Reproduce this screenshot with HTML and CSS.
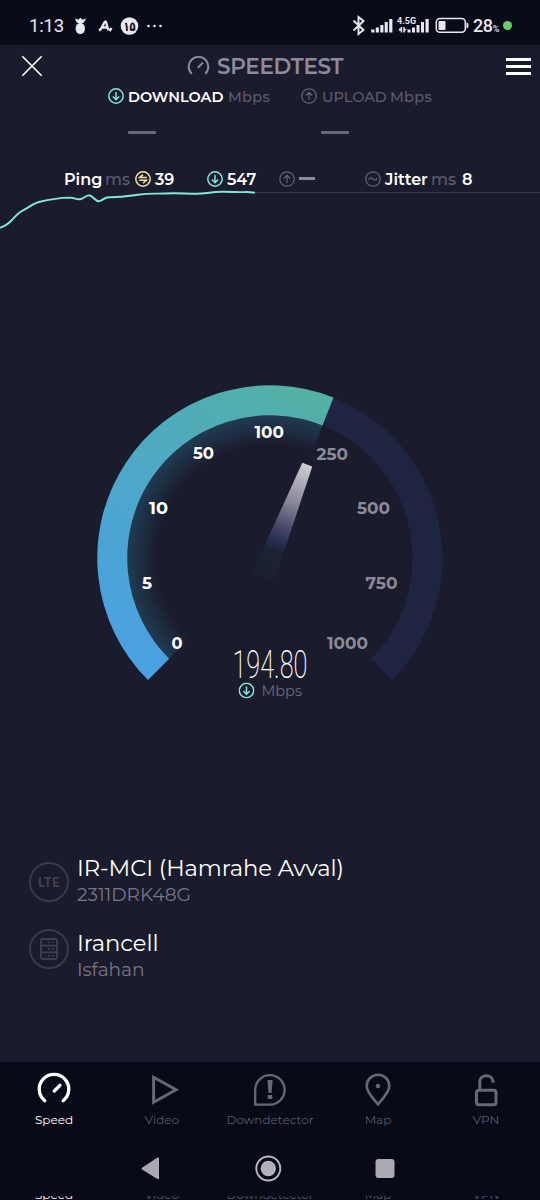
FILE: index.html
```html
<!DOCTYPE html>
<html lang="en">
<head>
<meta charset="utf-8">
<title>Speedtest</title>
<link rel="stylesheet" href="styles.css">
</head>
<body>
<svg class="defs" width="0" height="0" aria-hidden="true">
  <symbol id="down" viewBox="0 0 16 16"><circle cx="8" cy="8" r="7.2"/><path d="M8 4v7.6M4.8 8.5 8 11.7l3.2-3.2"/></symbol>
  <symbol id="up" viewBox="0 0 16 16"><circle cx="8" cy="8" r="7.2"/><path d="M8 12V4.4M4.8 7.5 8 4.3l3.2 3.2"/></symbol>
  <symbol id="ping" viewBox="0 0 16 16"><circle cx="8" cy="8" r="7.2"/><path d="M11.8 6.6H4.5L8 3.6M4.2 9.2h7.3L8 12.3"/></symbol>
  <symbol id="wave" viewBox="0 0 16 16"><circle cx="8" cy="8" r="7.2"/><path d="M3.7 9C5 6.3 6.6 6.5 8 8s3 1.600 4.300-.8"/></symbol>
</svg>
<main class="phone">
  <header class="status">
    <span class="clock">1:13</span>
    <svg class="notices" width="90" height="22" viewBox="0 0 90 22">
      <g fill="#e9e8ef"><ellipse cx="6.300" cy="13.500" rx="4.700" ry="5.600"/><path d="M.8 3.300l3.200 1.500 2.500-2 2 2 3.700-1.500-2.200 4-3.500 2-4-2z"/>
      <circle cx="55.500" cy="11" r="8.800"/><circle cx="74.500" cy="11" r="1.300"/><circle cx="80.500" cy="11" r="1.300"/><circle cx="86.500" cy="11" r="1.300"/></g>
      <path d="M25 15.500c4-2 4.500-9 6.300-9 1.700 0 1.200 6 3.200 8.500M27.500 12.500h5.500M35.500 16l2-3" fill="none" stroke="#e9e8ef" stroke-width="2.400"/>
      <text x="49.500" y="15.500" class="badge" textLength="12" lengthAdjust="spacingAndGlyphs">۱۵</text>
    </svg>
    <svg class="signals" width="117" height="24" viewBox="352 14 117 24">
      <path d="M353.500 20.500l10 9.500-5 4V17l5 4-10 9.500" fill="none" stroke="#e9e8ef" stroke-width="1.900"/>
      <g fill="#e9e8ef">
        <path d="M371.200 29.500h3.300v3h-3.300zM375.800 27.500h3.100v5h-3.100zM380.300 25h3.100v7.500h-3.100zM384.700 22h3.100v10.500h-3.100zM389.200 19h3.200v13.500h-3.200z"/>
        <path d="M407.500 29.500h3v3h-3zM412 27.500h3v5h-3zM416.500 25h3v7.500h-3zM421 22h3v10.500h-3zM425.500 19h3.200v13.500h-3.200z"/>
        <path d="M399 28.500h1.700V27h1.500v5.500h-1.500v-1.700H399zM403.300 27h1.500v1.500l1.900 1.200-1.900 1.300v1.500h-1.500z"/>
        <rect x="438.500" y="21" width="7" height="9" rx="1"/><path d="M466.500 22.500q2 0 2 3t-2 3z"/>
      </g>
      <rect x="436.300" y="18.500" width="29" height="13.700" rx="3.500" fill="none" stroke="#e9e8ef" stroke-width="1.500"/>
      <text x="397" y="24.300" class="net" textLength="19" lengthAdjust="spacingAndGlyphs">4.5G</text>
    </svg>
    <span class="battery">28<small>%</small></span><i class="dot"></i>
  </header>

  <section class="titlebar">
    <svg width="22" height="22" viewBox="0 0 22 22" class="close"><path d="M1.300 1.300l19.400 19.400M20.700 1.300L1.300 20.700"/></svg>
    <div class="brand">
      <svg width="23" height="20" viewBox="0 0 23 20"><path d="M4.800 17.800A9.800 9.800 0 1 1 18.200 17.800M10.800 11.800l5.200-5.200"/></svg>
      <h1>SPEEDTEST</h1>
    </div>
    <div class="menu"><i></i><i></i><i></i></div>
  </section>

  <section class="modes">
    <div class="mode active"><svg class="ico teal"><use href="#down"/></svg><b>DOWNLOAD</b><span>Mbps</span></div>
    <div class="mode upload"><svg class="ico grey"><use href="#up"/></svg><b>UPLOAD</b><span>Mbps</span></div>
  </section>
  <section class="blanks"><i></i><i></i></section>

  <section class="metrics">
    <b class="ping">Ping</b><span class="unit">ms</span><svg class="ico yellow"><use href="#ping"/></svg><b class="v39">39</b>
    <svg class="ico teal"><use href="#down"/></svg><b class="v547">547</b>
    <svg class="ico grey up"><use href="#up"/></svg><i class="none"></i>
    <svg class="ico grey"><use href="#wave"/></svg><b class="jitter">Jitter</b><span class="unit junit">ms</span><b>8</b>
  </section>

  <svg class="chart" width="540" height="42" viewBox="0 188 540 42">
    <path d="M255 192.600H540" stroke="#3b3b4b" stroke-width="1"/>
    <path d="M-1 228C5 226.500 8 224 12 220C16 215.500 18 212.800 23 210.300C29 207.500 33 203.500 39 202C48 199.700 59 197.700 70 197.600C75 197.700 77 200.300 81 199C85 197.500 87 194.500 90 195.500C94 197 95 201.300 99 201.300C103 200.300 104 197.300 109 197.200C121 197.500 130 195.800 140 194.500C150 193 157 194 165 193.500C177 192.700 187 194 197 193.800C205 193.500 211 192.100 222 191.800C232 191.700 242 192.600 246 191.900C250 191.900 250 192.600 255 192.600" fill="none" stroke="#80e8df" stroke-width="1.900"/>
  </svg>

  <svg class="gauge" width="540" height="335" viewBox="0 370 540 335">
    <defs>
      <linearGradient id="arc" gradientUnits="userSpaceOnUse" x1="150" y1="680" x2="325" y2="400"><stop stop-color="#4aa0e2"/><stop offset=".4" stop-color="#4ca6d0"/><stop offset="1" stop-color="#53b1a3"/></linearGradient>
      <radialGradient id="glow" gradientUnits="userSpaceOnUse" cx="270" cy="558" r="142.500"><stop offset=".79" stop-color="#24506a" stop-opacity="0"/><stop offset=".89" stop-color="#24506a" stop-opacity=".3"/><stop offset="1" stop-color="#24506a" stop-opacity=".6"/></radialGradient>
      <linearGradient id="needle" gradientUnits="userSpaceOnUse" x1="307" y1="464" x2="263" y2="577"><stop stop-color="#d0ced6"/><stop offset=".35" stop-color="#858495"/><stop offset=".55" stop-color="#484a69"/><stop offset=".69" stop-color="#252d50"/><stop offset=".76" stop-color="#1b2336"/><stop offset="1" stop-color="#1b2030"/></linearGradient>
    </defs>
    <path d="M158.600 669.400A157.500 157.500 0 1 1 381.400 669.400" fill="none" stroke="#1f2440" stroke-width="30"/>
    <path d="M270 558L169.200 658.800A142.500 142.500 0 0 1 322.500 425.500Z" fill="url(#glow)"/>
    <path d="M158.600 669.400A157.500 157.500 0 0 1 328 411.500" fill="none" stroke="url(#arc)" stroke-width="30"/>
    <path d="M302.300 462.700L312.300 466.500 274.500 580.500 252.300 572.700Z" fill="url(#needle)"/>
    <g class="ticks">
      <text x="171.500" y="649" textLength="11" lengthAdjust="spacingAndGlyphs">0</text>
      <text x="142" y="589" textLength="10" lengthAdjust="spacingAndGlyphs">5</text>
      <text x="149" y="514" textLength="19" lengthAdjust="spacingAndGlyphs">10</text>
      <text x="193" y="458.800" textLength="21" lengthAdjust="spacingAndGlyphs">50</text>
      <text x="254.500" y="437.500" textLength="29.500" lengthAdjust="spacingAndGlyphs">100</text>
    </g>
    <g class="ticks off">
      <text x="316.500" y="459.500" textLength="31.500" lengthAdjust="spacingAndGlyphs">250</text>
      <text x="357" y="514" textLength="33" lengthAdjust="spacingAndGlyphs">500</text>
      <text x="365.500" y="589" textLength="32" lengthAdjust="spacingAndGlyphs">750</text>
      <text x="327" y="649" textLength="41" lengthAdjust="spacingAndGlyphs">1000</text>
    </g>
    <text x="232.500" y="677.500" class="speed" textLength="75" lengthAdjust="spacingAndGlyphs">194.80</text>
    <use href="#down" x="238.500" y="682.500" width="16" height="16" class="teal line"/>
    <text x="261.500" y="695.500" class="mbps" textLength="40.500" lengthAdjust="spacingAndGlyphs">Mbps</text>
  </svg>

  <section class="hosts">
    <div class="host">
      <div class="ring">LTE</div>
      <div><h2 class="isp">IR-MCI (Hamrahe Avval)</h2><p class="device">2311DRK48G</p></div>
    </div>
    <div class="host second">
      <div class="ring"><svg width="18" height="22" viewBox="0 0 18 22"><rect x="1" y="1" width="16" height="20" rx="1.500"/><path d="M1 7.700h16M1 14.300h16"/><path d="M8 4.400h6.500M8 11h6.500M8 17.600h6.500" stroke-dasharray="2.500 1.500" stroke-width="1.300"/></svg></div>
      <div><h2 class="server">Irancell</h2><p class="city">Isfahan</p></div>
    </div>
  </section>

  <nav class="tabs">
    <div class="tab on"><svg width="36" height="36" viewBox="0 0 36 36"><path d="M8.800 28.700A14.800 14.800 0 1 1 27.200 28.700M18.300 19l5.600-5.700" stroke-width="3.300"/></svg><span class="t1">Speed</span></div>
    <div class="tab"><svg width="36" height="36" viewBox="0 0 36 36"><path d="M9.600 5.300v25L32 17.800z" stroke-width="3"/></svg><span class="t2">Video</span></div>
    <div class="tab"><svg width="36" height="36" viewBox="0 0 36 36"><path d="M3.200 32.600V18A14.700 14.700 0 1 1 18 32.600z" stroke-width="2.300"/><path d="M15.400 8h5.200l-1 13h-3.200zM15.700 23h4.600v4h-4.600z" class="solid"/></svg><span class="t3">Downdetector</span></div>
    <div class="tab"><svg width="36" height="36" viewBox="0 0 36 36"><path d="M18 32.300C13.500 26.500 6.700 20.500 6.700 14A11.300 11.300 0 0 1 29.300 14C29.300 20.500 22.500 26.500 18 32.300z" stroke-width="2.600"/><circle cx="18" cy="14" r="2.300" class="solid"/></svg><span class="t4">Map</span></div>
    <div class="tab"><svg width="36" height="36" viewBox="0 0 36 36"><rect x="8.500" y="18.300" width="19.500" height="14.500" rx="2.500" stroke-width="3"/><path d="M11.800 18V9.500C11.800 1.700 24.800 1.700 25 9.500V10.800" stroke-width="3"/></svg><span class="t5">VPN</span></div>
  </nav>
  <footer class="system">
    <svg width="540" height="55" viewBox="0 1141 540 55" fill="#aaa8b0">
      <path d="M159 1158v20.500q-.3 1-1.500.5L142 1169.500q-1-1 0-1.700l15.500-10.200q1.200-.3 1.500.4z"/>
      <circle cx="268.300" cy="1168.500" r="12" fill="none" stroke="#b8b6c0" stroke-width="1.900"/><circle cx="268.300" cy="1168.500" r="7.700" fill="#b3b1b9"/>
      <rect x="375.500" y="1159" width="19" height="19" rx="3"/>
    </svg>
  </footer>
  <div class="echo"><span class="on t1">Speed</span><span class="t2">Video</span><span class="t3">Downdetector</span><span class="t4">Map</span><span class="t5">VPN</span></div>
</main>
</body>
</html>
```
FILE: styles.css
```css
* { box-sizing: border-box; }
body { margin: 0; background: #1a1b2c; font-family: Montserrat, Inter, sans-serif; color: #fff; }
h1, h2, p { margin: 0; font-weight: 400; }
.defs { display: block; height: 0; }
.phone { width: 540px; height: 1200px; overflow: hidden; display: flex; flex-direction: column; }
.phone > * { flex: none; }
.phone svg { display: block; flex: none; }

.status { height: 45px; background: #090b18; display: flex; align-items: center; padding: 6px 0 0 29px; font-family: Roboto, sans-serif; color: #e9e8ef; }
.clock { width: 45px; font-size: 18.500px; letter-spacing: -.2px; }
.badge { font: 700 13px "DejaVu Sans", sans-serif; fill: #090b18; }
.net { font: 700 9.500px Roboto, sans-serif; fill: #e9e8ef; }
.signals { margin-left: 188px; }
.battery { width: 31px; margin-left: 4px; font-size: 18px; font-weight: 500; letter-spacing: -.4px; white-space: nowrap; }
.battery small { font-size: 9px; font-weight: 500; }
.dot { width: 9px; height: 9px; border-radius: 50%; background: #65cf6c; margin-left: -1px; }

.titlebar { height: 42px; display: flex; align-items: center; padding: 0 0 0 21px; }
.close { fill: none; stroke: #fff; stroke-width: 1.600; }
.brand { display: flex; align-items: center; gap: 7px; margin-left: 144px; color: #8b8a9f; width: 160px; }
.brand svg { fill: none; stroke: #8b8a9f; stroke-width: 2; }
.brand h1 { font-size: 21.500px; font-weight: 600; letter-spacing: -.3px; line-height: 24px; }
.menu { width: 25px; margin-left: 159px; display: grid; gap: 4px; padding-top: 1px; }
.menu i { height: 3px; background: #fff; }

.ico { width: 16px; height: 16px; fill: none; stroke-width: 1.500; }
.line { fill: none; stroke-width: 1.500; }
.teal { stroke: #80e8df; }
.grey { stroke: #65647a; stroke-width: 1.200; }
.yellow { stroke: #f5e3a0; }

.modes { height: 20px; display: flex; align-items: center; padding-left: 108px; font-size: 14.500px; line-height: 20px; color: #5d5c70; }
.modes .ico { margin-top: -2px; }
.mode { display: flex; align-items: center; width: 193px; }
.mode b { margin-left: 5px; font-weight: 500; width: 68px; letter-spacing: 0; white-space: nowrap; }
.mode.active b { margin-left: 4px; font-weight: 600; color: #fff; width: 100px; }
.mode span { font-weight: 500; letter-spacing: .25px; }
.blanks { display: flex; gap: 165px; padding: 24px 0 0 128px; height: 62px; }
.blanks i { width: 28px; height: 3px; border-radius: 1px; background: #6a697c; }

.metrics { height: 20px; display: flex; align-items: center; padding-left: 64px; font-size: 16px; line-height: 20px; }
.metrics b, .metrics .unit { font-weight: 600; padding-top: 1px; }
.ping { width: 41px; }
.metrics .unit { width: 30px; color: #5d5c70; font-weight: 500; }
.v39 { width: 52px; margin-left: 4px; }
.v547 { width: 52px; margin-left: 4px; }
.none { width: 16px; height: 3px; background: #8b8a9f; margin: -2px 50px 0 4px; }
.jitter { width: 46px; margin-left: 4px; }
.metrics .junit { width: 31px; }
.chart { margin-top: -1px; }

.gauge { margin-top: 140px; }
.ticks { font: 700 17px Montserrat, Inter, sans-serif; fill: #fff; }
.ticks.off { fill: #8b8a98; }
.speed { font: 200 39px Roboto, sans-serif; fill: #fff; }
.mbps { font: 400 14.500px Montserrat, Inter, sans-serif; fill: #6a697c; }

.hosts { height: 357px; padding: 150px 0 0 29px; }
.host { display: flex; gap: 8px; height: 75px; }
.ring { width: 40px; height: 40px; margin-top: 7px; border: 2px solid #3a394c; border-radius: 50%; display: flex; align-items: center; justify-content: center; color: #454458; font: 700 12.500px Lato, sans-serif; letter-spacing: .6px; }
.second .ring { margin-top: -1px; }
.ring svg { fill: none; stroke: #3f3e52; stroke-width: 1.800; }
.host h2 { font-size: 22.700px; font-weight: 400; line-height: 26px; letter-spacing: -.1px; white-space: nowrap; }
.host p { font-size: 18.600px; font-weight: 400; line-height: 28px; letter-spacing: -.05px; color: #77768a; }

.tabs { height: 79px; background: #080a18; display: grid; grid-template-columns: repeat(5, 1fr); padding-top: 10px; }
.tab { display: flex; flex-direction: column; align-items: center; gap: 3px; font-size: 12px; line-height: 17px; color: #5b5a6a; white-space: nowrap; }
.tab svg { fill: none; stroke: #686776; stroke-linejoin: miter; }
.tab .solid { fill: #686776; stroke: none; }
.tab.on, .echo .on { color: #fff; }
.tab.on svg { stroke: #fff; stroke-linecap: round; }
.system { height: 55px; background: #080a18; }
.echo { height: 4px; background: #080a18; overflow: hidden; display: grid; grid-template-columns: repeat(5, 1fr); font-size: 12px; line-height: 17px; color: #5b5a6a; text-align: center; }
.echo span { margin-top: -10px; }
```
